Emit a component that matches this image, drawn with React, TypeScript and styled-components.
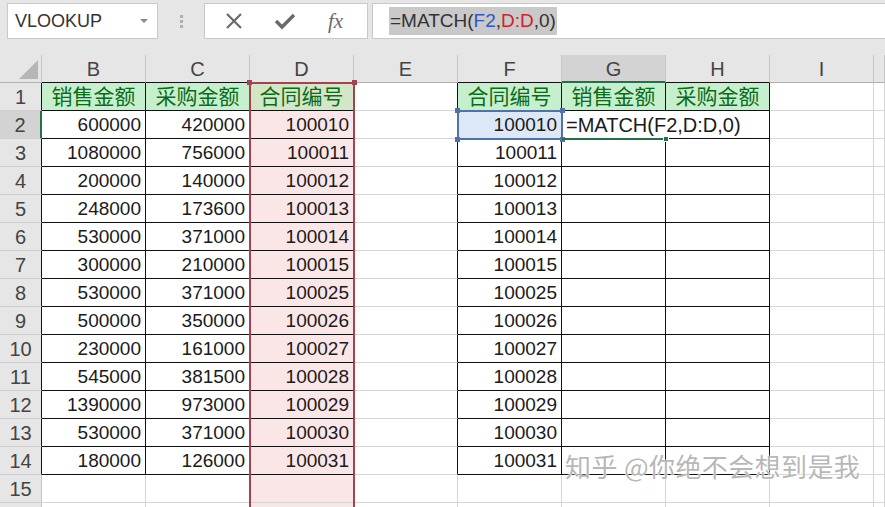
import React from "react";
import styled, { createGlobalStyle } from "styled-components";

const GlobalStyle = createGlobalStyle`
  html, body {
    margin: 0;
    padding: 0;
    background: #e6e6e6;
    overflow: hidden;
  }
  body {
    font-family: "Liberation Sans", "Noto Sans CJK SC", sans-serif;
  }
`;

const Page = styled.div`
  position: relative;
  width: 885px;
  height: 507px;
  overflow: hidden;
  background: #e6e6e6;
  display: flex;
  flex-direction: column;
`;

const FormulaBar = styled.div`
  display: flex;
  align-items: center;
  height: 36px;
  margin: 3px 0 16px 7px;
`;

const NameBox = styled.div`
  box-sizing: border-box;
  width: 151px;
  height: 36px;
  background: #fff;
  border: 1px solid #c9c9c9;
  display: flex;
  align-items: center;
  justify-content: space-between;
  padding: 0 9px 0 7px;
  font-size: 18px;
  color: #333;
`;

const Caret = styled.span`
  width: 0;
  height: 0;
  border-left: 4px solid transparent;
  border-right: 4px solid transparent;
  border-top: 4px solid #8a8a8a;
`;

const Grip = styled.div`
  width: 46px;
  display: flex;
  flex-direction: column;
  align-items: center;
  gap: 2px;
  span {
    width: 3px;
    height: 3px;
    background: #b0b0b0;
  }
`;

const ActionBox = styled.div`
  box-sizing: border-box;
  width: 164px;
  height: 36px;
  background: #fff;
  border: 1px solid #c9c9c9;
  display: flex;
  align-items: center;
  justify-content: space-around;
  padding: 0 8px 0 4px;
`;

const Fx = styled.span`
  font-family: "Liberation Serif", serif;
  font-style: italic;
  font-size: 21px;
  color: #6a6a6a;
`;

const FormulaInput = styled.div`
  box-sizing: border-box;
  flex: 1;
  height: 36px;
  margin-left: 4px;
  background: #fff;
  border: 1px solid #c9c9c9;
  border-right: none;
  display: flex;
  align-items: center;
  padding-left: 16px;
  font-size: 19px;
  color: #333;
`;

const Highlight = styled.span`
  background: #c9c9c9;
  padding: 2px 1px;
  line-height: 24px;
`;

const Ref = styled.span<{ $c: string }>`
  color: ${p => p.$c};
`;

const Grid = styled.div`
  position: relative;
  display: grid;
  grid-template-columns: 42px repeat(8, 104px) 1fr;
  grid-auto-rows: 28px;
  background: #fff;
`;

const ColHead = styled.div<{ $active?: boolean; $bottom: string }>`
  box-sizing: border-box;
  background: ${p => (p.$active ? "#d3d3d3" : "#e6e6e6")};
  border-right: 1px solid #c6c6c6;
  border-bottom: ${p => (p.$active ? 2 : 1)}px solid ${p => p.$bottom};
  text-align: center;
  font-size: 20px;
  line-height: 29px;
  color: #444;
`;

const Corner = styled.div`
  box-sizing: border-box;
  background: #e6e6e6;
  border-right: 1px solid #c6c6c6;
  border-bottom: 1px solid #b0b0b0;
  display: flex;
  align-items: flex-end;
  justify-content: flex-end;
  padding: 0 3px 3px 0;
  &::after {
    content: "";
    width: 0;
    height: 0;
    border-left: 19px solid transparent;
    border-bottom: 19px solid #b6b6b6;
  }
`;

const RowHead = styled.div<{ $active?: boolean; $right: string }>`
  box-sizing: border-box;
  background: ${p => (p.$active ? "#d3d3d3" : "#e6e6e6")};
  border-right: ${p => (p.$active ? 2 : 1)}px solid ${p => p.$right};
  border-bottom: 1px solid #cfcfcf;
  text-align: center;
  font-size: 20px;
  line-height: 29px;
  color: #444;
`;

const Cell = styled.div<{
  $bg?: string;
  $right: string;
  $bottom: string;
  $align: "left" | "right" | "center";
  $color?: string;
  $size: number;
}>`
  box-sizing: border-box;
  position: relative;
  background: ${p => p.$bg ?? "transparent"};
  border-right: 1px solid ${p => p.$right};
  border-bottom: 1px solid ${p => p.$bottom};
  text-align: ${p => p.$align};
  color: ${p => p.$color ?? "#1a1a1a"};
  font-size: ${p => p.$size}px;
  line-height: 28px;
  padding: 0 4px;
  white-space: nowrap;
  overflow: visible;
`;

const RangeBox = styled.div<{ $c: string }>`
  position: absolute;
  box-sizing: border-box;
  border: 2px solid ${p => p.$c};
  pointer-events: none;
`;

const Handle = styled.span<{ $c: string; $x: "l" | "r"; $y: "t" | "b" }>`
  position: absolute;
  width: 5px;
  height: 5px;
  background: ${p => p.$c};
  ${p => (p.$x === "l" ? "left: -4px;" : "right: -4px;")}
  ${p => (p.$y === "t" ? "top: -4px;" : "bottom: -4px;")}
`;

const ActiveLine = styled.div`
  position: absolute;
  height: 2px;
  background: #217346;
  &::after {
    content: "";
    position: absolute;
    right: -3px;
    top: -2px;
    width: 6px;
    height: 6px;
    background: #217346;
    border: 1px solid #fff;
    box-sizing: border-box;
  }
`;

const Watermark = styled.div`
  position: absolute;
  left: 565px;
  top: 447px;
  font-family: "Noto Sans CJK SC", sans-serif;
  font-size: 26px;
  letter-spacing: 0.4px;
  color: rgba(170, 170, 170, 0.85);
  text-shadow: 0 0 2px #fff, 0 0 1px #fff;
  white-space: nowrap;
`;

const LETTERS = ["", "B", "C", "D", "E", "F", "G", "H", "I", ""];

const LEFT: [string, string, string][] = [
  ["600000", "420000", "100010"],
  ["1080000", "756000", "100011"],
  ["200000", "140000", "100012"],
  ["248000", "173600", "100013"],
  ["530000", "371000", "100014"],
  ["300000", "210000", "100015"],
  ["530000", "371000", "100025"],
  ["500000", "350000", "100026"],
  ["230000", "161000", "100027"],
  ["545000", "381500", "100028"],
  ["1390000", "973000", "100029"],
  ["530000", "371000", "100030"],
  ["180000", "126000", "100031"],
];

const F_COL = [
  "100010", "100011", "100012", "100013", "100014", "100015", "100025",
  "100026", "100027", "100028", "100029", "100030", "100031",
];

const HEAD_LEFT = ["销售金额", "采购金额", "合同编号"];
const HEAD_RIGHT = ["合同编号", "销售金额", "采购金额"];

const GRID = "#d6d6d6";
const BLACK = "#111";
const GREEN_FILL = "#c6efce";
const GREEN_TEXT = "#0b6b1a";
const PINK = "#fbe6e7";
const RED = "#a4434f";
const BLUE = "#4f72a8";

const isTableCol = (c: number) => (c >= 1 && c <= 3) || (c >= 5 && c <= 7);
const inTable = (c: number, r: number) => isTableCol(c) && r >= 1 && r <= 14;

const COL_LEFT = (c: number) => 42 + 104 * (c - 1);

function renderCell(r: number, c: number) {
  const key = `${r}-${c}`;
  let right =
    inTable(c, r) || (c === 4 && r >= 1 && r <= 14) ? BLACK : GRID;
  const bottom = inTable(c, r) ? BLACK : GRID;
  let text = "";
  let align: "left" | "right" | "center" = "right";
  let color: string | undefined;
  let size = 19;
  let bg: string | undefined;

  if (c === 3) bg = PINK;

  if (r === 1 && isTableCol(c)) {
    text = c <= 3 ? HEAD_LEFT[c - 1] : HEAD_RIGHT[c - 5];
    align = "center";
    color = GREEN_TEXT;
    size = 21;
    bg = c === 3 ? "#d4e6c8" : GREEN_FILL;
  } else if (r >= 2 && r <= 14) {
    if (c >= 1 && c <= 3) text = LEFT[r - 2][c - 1];
    if (c === 5) text = F_COL[r - 2];
  }

  if (r === 2 && c === 5) bg = "#dde8f6";
  if (r === 2 && c === 6) {
    // the cell is being edited, so its text runs over into H2
    text = "=MATCH(F2,D:D,0)";
    align = "left";
    size = 20;
    right = "transparent";
  }

  return (
    <Cell
      key={key}
      $bg={bg}
      $right={right}
      $bottom={bottom}
      $align={align}
      $color={color}
      $size={size}
    >
      {text}
    </Cell>
  );
}

function Sheet() {
  const rows: React.ReactNode[] = [];
  LETTERS.forEach((l, c) => {
    if (c === 0) {
      rows.push(<Corner key="corner" />);
      return;
    }
    rows.push(
      <ColHead key={`h-${c}`} $active={c === 6} $bottom={c === 6 ? "#217346" : isTableCol(c) ? BLACK : "#b0b0b0"}>
        {l}
      </ColHead>
    );
  });
  for (let r = 1; r <= 16; r++) {
    rows.push(
      <RowHead
        key={`r-${r}`}
        $active={r === 2}
        $right={r === 2 ? "#217346" : r <= 14 ? BLACK : "#c6c6c6"}
      >
        {r <= 15 ? r : ""}
      </RowHead>
    );
    for (let c = 1; c < LETTERS.length; c++) rows.push(renderCell(r, c));
  }

  return (
    <Grid>
      {rows}
      <RangeBox $c={RED} style={{ left: COL_LEFT(3) - 1, top: 27, width: 106, height: 500 }}>
        <Handle $c={RED} $x="l" $y="t" />
        <Handle $c={RED} $x="r" $y="t" />
      </RangeBox>
      <RangeBox $c={BLUE} style={{ left: COL_LEFT(5) - 1, top: 55, width: 106, height: 30 }}>
        <Handle $c={BLUE} $x="l" $y="t" />
        <Handle $c={BLUE} $x="r" $y="t" />
        <Handle $c={BLUE} $x="l" $y="b" />
        <Handle $c={BLUE} $x="r" $y="b" />
      </RangeBox>
      <ActiveLine style={{ left: COL_LEFT(6), top: 83, width: 104 }} />
    </Grid>
  );
}

export default function App() {
  return (
    <Page>
      <GlobalStyle />
      <FormulaBar>
        <NameBox>
          <span>VLOOKUP</span>
          <Caret />
        </NameBox>
        <Grip>
          <span />
          <span />
          <span />
        </Grip>
        <ActionBox>
          <svg width="18" height="18" viewBox="0 0 18 18">
            <path d="M2 2 L16 16 M16 2 L2 16" stroke="#6a6a6a" strokeWidth="2.2" fill="none" />
          </svg>
          <svg width="22" height="18" viewBox="0 0 22 18">
            <path d="M2 9 L8 15 L20 3" stroke="#6a6a6a" strokeWidth="3.4" fill="none" />
          </svg>
          <Fx>fx</Fx>
        </ActionBox>
        <FormulaInput>
          <Highlight>
            =MATCH(<Ref $c="#2f58c4">F2</Ref>,<Ref $c="#d0202a">D:D</Ref>,0)
          </Highlight>
        </FormulaInput>
      </FormulaBar>
      <Sheet />
      <Watermark>知乎 @你绝不会想到是我</Watermark>
    </Page>
  );
}
